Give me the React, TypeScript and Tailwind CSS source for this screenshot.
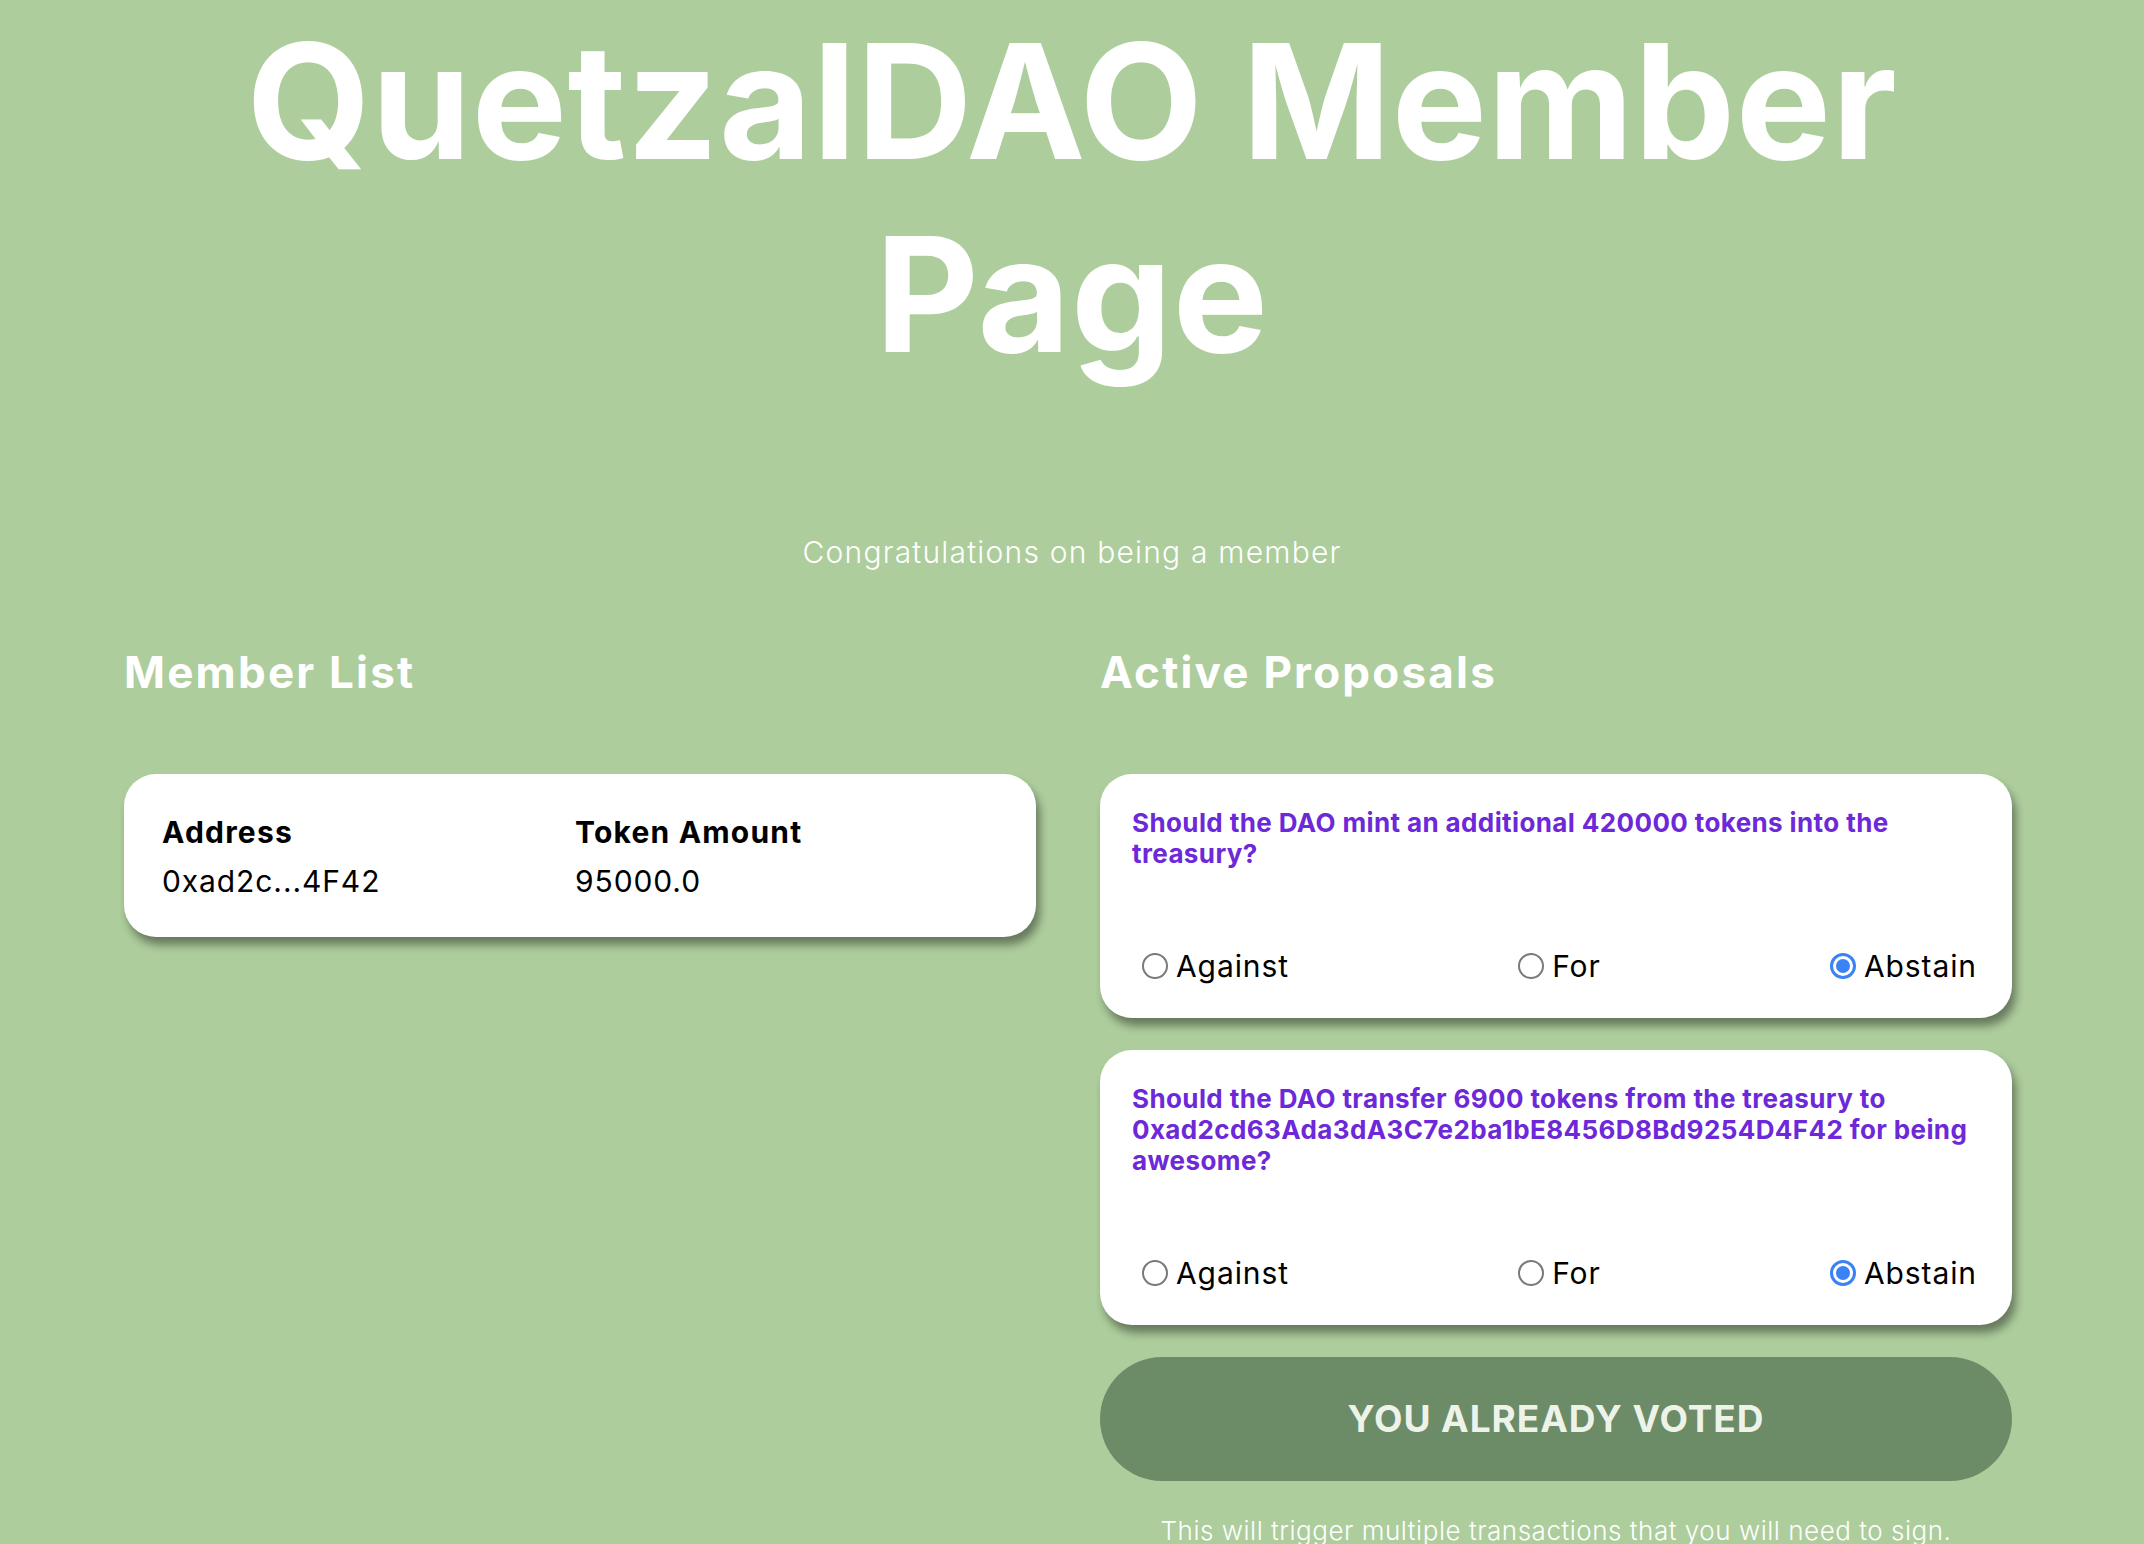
import React from 'react'

const proposals = [
  {
    id: 1,
    text: 'Should the DAO mint an additional 420000 tokens into the treasury?',
  },
  {
    id: 2,
    text: 'Should the DAO transfer 6900 tokens from the treasury to 0xad2cd63Ada3dA3C7e2ba1bE8456D8Bd9254D4F42 for being awesome?',
  },
]

function Radio({ checked }: { checked?: boolean }) {
  if (checked) {
    return (
      <span className="flex h-[26px] w-[26px] shrink-0 items-center justify-center rounded-full border-[3px] border-[#3b82f6] bg-white">
        <span className="h-[14px] w-[14px] rounded-full bg-[#3b82f6]" />
      </span>
    )
  }
  return <span className="h-[26px] w-[26px] shrink-0 rounded-full border-2 border-[#7a7a7a] bg-white" />
}

function ProposalCard({ text }: { text: string }) {
  return (
    <div className="rounded-[32px] bg-white px-[32px] pb-[34px] pt-[33px] shadow-[4px_8px_8px_rgba(0,0,0,0.4)]">
      <h5 className="text-[26px] font-bold leading-[31px] tracking-[0.015em] text-[#6d28d9]">{text}</h5>
      <div className="mt-[79px] flex items-center justify-between pl-[10px] pr-[3px] text-[30px] leading-[36px] tracking-[0.03em] text-black">
        {['Against', 'For', 'Abstain'].map((label) => (
          <label key={label} className="flex items-center gap-[8px]">
            <Radio checked={label === 'Abstain'} />
            <span>{label}</span>
          </label>
        ))}
      </div>
    </div>
  )
}

export default function App() {
  return (
    <div className="min-h-screen bg-[#adcd9c] pt-[5px] text-white" style={{ fontFamily: 'Inter, "Noto Sans", sans-serif' }}>
      <h1 className="text-center text-[160px] font-bold leading-[193px] tracking-[0.004em]">
        QuetzalDAO Member
        <br />
        Page
      </h1>
      <p className="mt-[143px] text-center text-[30px] font-light leading-[36px] tracking-[0.04em]">
        Congratulations on being a member
      </p>

      <div className="mt-[76px] flex gap-[64px] pl-[124px]">
        <div className="w-[912px]">
          <h2 className="text-[44px] font-bold leading-[53px] tracking-[0.05em]">Member List</h2>
          <div className="mt-[75px] rounded-[32px] bg-white px-[38px] pb-[31px] pt-[34px] text-[30px] leading-[49px] text-black shadow-[4px_8px_8px_rgba(0,0,0,0.4)]">
            <div className="grid grid-cols-[413px_1fr] tracking-[0.03em]">
              <div className="font-bold tracking-[0.04em]">Address</div>
              <div className="font-bold tracking-[0.04em]">Token Amount</div>
              <div>0xad2c...4F42</div>
              <div>95000.0</div>
            </div>
          </div>
        </div>

        <div className="w-[912px]">
          <h2 className="text-[44px] font-bold leading-[53px] tracking-[0.05em]">Active Proposals</h2>
          <div className="mt-[75px] flex flex-col gap-[32px]">
            {proposals.map((p) => (
              <ProposalCard key={p.id} text={p.text} />
            ))}
            <button
              disabled
              className="h-[124px] w-full rounded-full bg-[#6c8b67] text-[37px] font-bold uppercase tracking-[0.025em] text-[#eef3ea]"
            >
              You already voted
            </button>
          </div>
          <p className="mt-[34px] pb-[40px] text-center text-[26px] font-light leading-[32px] tracking-[0.02em]">
            This will trigger multiple transactions that you will need to sign.
          </p>
        </div>
      </div>
    </div>
  )
}
